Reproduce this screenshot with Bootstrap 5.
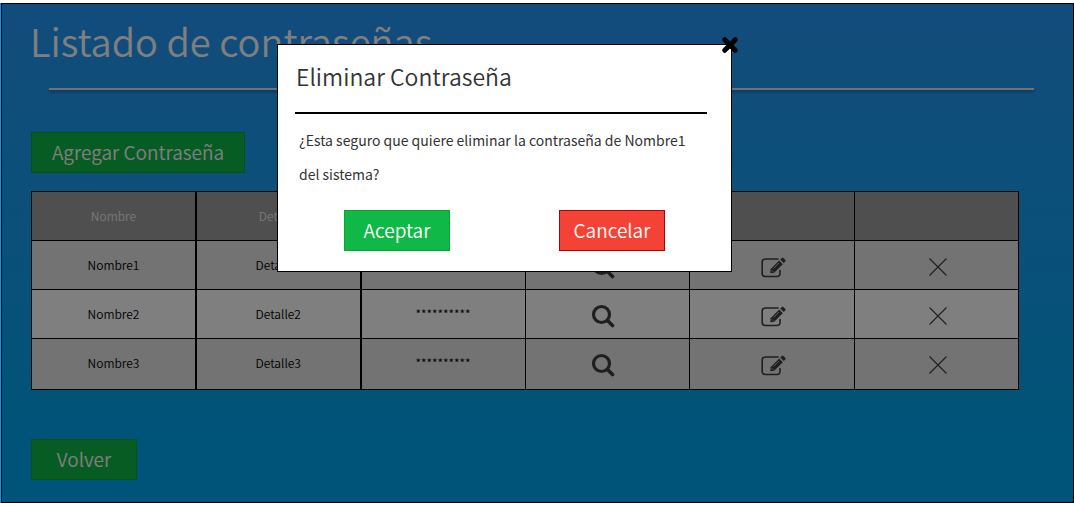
<!DOCTYPE html>
<html lang="es">
<head>
<meta charset="utf-8">
<meta name="viewport" content="width=device-width, initial-scale=1">
<title>Listado de contraseñas</title>
<link rel="stylesheet" href="https://cdn.jsdelivr.net/npm/bootstrap@5.3.0/dist/css/bootstrap.min.css">
<style>
  body { font-family: "Noto Sans CJK SC", sans-serif; background: #fff; color: #333; padding-top: 3px; }
  .edge { border-left: 1px solid #0c94fb; }
  .screen { border: 1px solid #000; padding: 7px 54px 22px 28px; background: linear-gradient(#2698f8, #02a8f2 90%); }
  .page-title { font-size: 38px; line-height: 60px; font-weight: 350; color: #fff; }
  .title-rule { height: 2px; margin: 17px -15px 42px 19px; background: #e8e0d8; box-shadow: 0 2px 3px rgba(0,0,0,.35); opacity: 1; border: 0; }
  .content-inset { padding-left: 1px; }
  .btn-flat { --bs-btn-border-radius: 0; --bs-btn-font-size: 19px; --bs-btn-font-weight: 350; --bs-btn-line-height: 24px; --bs-btn-padding-x: 8px; min-width: 106px; height: 41px; padding-top: 7px; padding-bottom: 8px; }
  .btn-go, .btn-go:hover { color: #fff; background: #0fb847; border-color: #0aa52f; }
  .btn-stop, .btn-stop:hover { color: #fff; background: #f44336; border-color: #a80608; }
  .btn-add { min-width: 214px; }
  .pass-table { table-layout: fixed; margin: 18px 0 49px; font-size: 12px; font-weight: 350; line-height: 18px; text-align: center; color: #000; border: 1px solid #000; border-collapse: collapse; }
  .pass-table th, .pass-table td { height: 49px; padding: 0 0 1px; vertical-align: middle; border: 1px solid #000; }
  .pass-table tbody tr:last-child td { height: 51px; padding-bottom: 3px; }
  .pass-table tr > :nth-child(-n+2) { border-right-width: 2px; }
  .pass-table thead { background: #9e9e9e; color: #f0f0f0; }
  .pass-table th { font-weight: 350; }
  .pass-table tbody tr { background: #e6e6e6; }
  .pass-table tbody tr:nth-child(even) { background: #fff; }
  .icon-btn { display: inline-flex; padding: 8px 8px 0 0; border: 0; background: none; color: #3e3e3e; }
  .icon-wide { padding: 10px 0 0 4px; }
  .icon-end { padding: 8px 0 0 4px; }
  .shade { background: rgba(0,0,0,.5); }
  .ask { top: 44px; left: 277px; width: 455px; max-width: 72%; padding: 11px 24px 20px 17px; background: #fff; border: 1px solid #000; }
  .ask-title { font-size: 23px; line-height: 40px; font-weight: 350; padding-left: 1px; }
  .ask-rule { height: 2px; margin: 16px 0 9px; background: #000; border: 0; opacity: 1; }
  .ask-text { font-size: 14px; line-height: 34px; padding-left: 4px; }
  .ask-actions { padding: 0 42px 0 49px; margin-top: 19px; }
  .ask-close { top: -9px; right: -8px; padding: 0; border: 0; background: none; line-height: 0; color: #000; }
</style>
</head>
<body>
<svg class="d-none" xmlns="http://www.w3.org/2000/svg">
  <symbol id="search" viewBox="0 0 24 24"><circle cx="10.500" cy="10.500" r="8" fill="none" stroke="currentColor" stroke-width="3.200"/><path d="M16.500 16.500 21.500 21.500" stroke="currentColor" stroke-width="3.600" stroke-linecap="round"/></symbol>
  <symbol id="edit" viewBox="0 0 25 22"><path d="M17 2H4.500Q1.200 2 1.200 5.300V16.200Q1.200 19.500 4.500 19.500H15.700Q19 19.500 19 16.200V13.500" fill="none" stroke="currentColor" stroke-width="1.600" stroke-linecap="round"/><path d="M9.600 12.200 18.200 3.600 21.800 7.200 13.200 15.800 9.300 16.200Z" fill="currentColor"/><path d="M19.200 2.600 21 .900Q21.700.300 22.400.900L24.400 2.900Q25 3.600 24.400 4.300L22.800 6.100Z" fill="currentColor"/><path d="M12.600 11.400 18 6M10.600 13.200 12.300 14.900" stroke="#d8d8d8" stroke-width=".8" fill="none"/></symbol>
  <symbol id="remove" viewBox="0 0 18 18"><path d="M.500.500 17.500 17.500M17.500.500.500 17.500" stroke="currentColor" stroke-width="1.100"/></symbol>
</svg>

<main class="edge">
  <div class="screen position-relative">
    <h1 class="page-title mb-0">Listado de contraseñas</h1>
    <hr class="title-rule">
    <div class="content-inset">
      <button type="button" class="btn btn-flat btn-go btn-add d-block">Agregar Contraseña</button>

      <table class="pass-table w-100">
        <thead>
          <tr><th scope="col">Nombre</th><th scope="col">Detalle</th><th scope="col">Contraseña</th><th></th><th></th><th></th></tr>
        </thead>
        <tbody>
          <tr>
            <td>Nombre1</td><td>Detalle1</td><td>**********</td>
            <td><button type="button" class="icon-btn" aria-label="Ver"><svg width="24" height="24"><use href="#search"/></svg></button></td>
            <td><button type="button" class="icon-btn icon-wide" aria-label="Editar"><svg width="25" height="22"><use href="#edit"/></svg></button></td>
            <td><button type="button" class="icon-btn icon-end" aria-label="Eliminar"><svg width="18" height="18"><use href="#remove"/></svg></button></td>
          </tr>
          <tr>
            <td>Nombre2</td><td>Detalle2</td><td>**********</td>
            <td><button type="button" class="icon-btn" aria-label="Ver"><svg width="24" height="24"><use href="#search"/></svg></button></td>
            <td><button type="button" class="icon-btn icon-wide" aria-label="Editar"><svg width="25" height="22"><use href="#edit"/></svg></button></td>
            <td><button type="button" class="icon-btn icon-end" aria-label="Eliminar"><svg width="18" height="18"><use href="#remove"/></svg></button></td>
          </tr>
          <tr>
            <td>Nombre3</td><td>Detalle3</td><td>**********</td>
            <td><button type="button" class="icon-btn" aria-label="Ver"><svg width="24" height="24"><use href="#search"/></svg></button></td>
            <td><button type="button" class="icon-btn icon-wide" aria-label="Editar"><svg width="25" height="22"><use href="#edit"/></svg></button></td>
            <td><button type="button" class="icon-btn icon-end" aria-label="Eliminar"><svg width="18" height="18"><use href="#remove"/></svg></button></td>
          </tr>
        </tbody>
      </table>

      <button type="button" class="btn btn-flat btn-go d-block">Volver</button>
    </div>
    <div class="shade position-absolute top-0 start-0 w-100 h-100"></div>
  </div>
</main>

<section class="ask position-absolute" role="dialog" aria-modal="true" aria-labelledby="askTitle">
  <button type="button" class="ask-close position-absolute" aria-label="Cerrar">
    <svg width="18" height="18" viewBox="0 0 18 18"><path d="M3.700 3.700 14.300 14.300M14.300 3.700 3.700 14.300" stroke="currentColor" stroke-width="5" stroke-linecap="round"/></svg>
  </button>
  <h2 id="askTitle" class="ask-title mb-0">Eliminar Contraseña</h2>
  <hr class="ask-rule">
  <p class="ask-text mb-0">¿Esta seguro que quiere eliminar la contraseña de Nombre1 del sistema?</p>
  <div class="ask-actions d-flex justify-content-between">
    <button type="button" class="btn btn-flat btn-go">Aceptar</button>
    <button type="button" class="btn btn-flat btn-stop">Cancelar</button>
  </div>
</section>
<script src="https://cdn.jsdelivr.net/npm/bootstrap@5.3.0/dist/js/bootstrap.bundle.min.js"></script>
</body>
</html>
